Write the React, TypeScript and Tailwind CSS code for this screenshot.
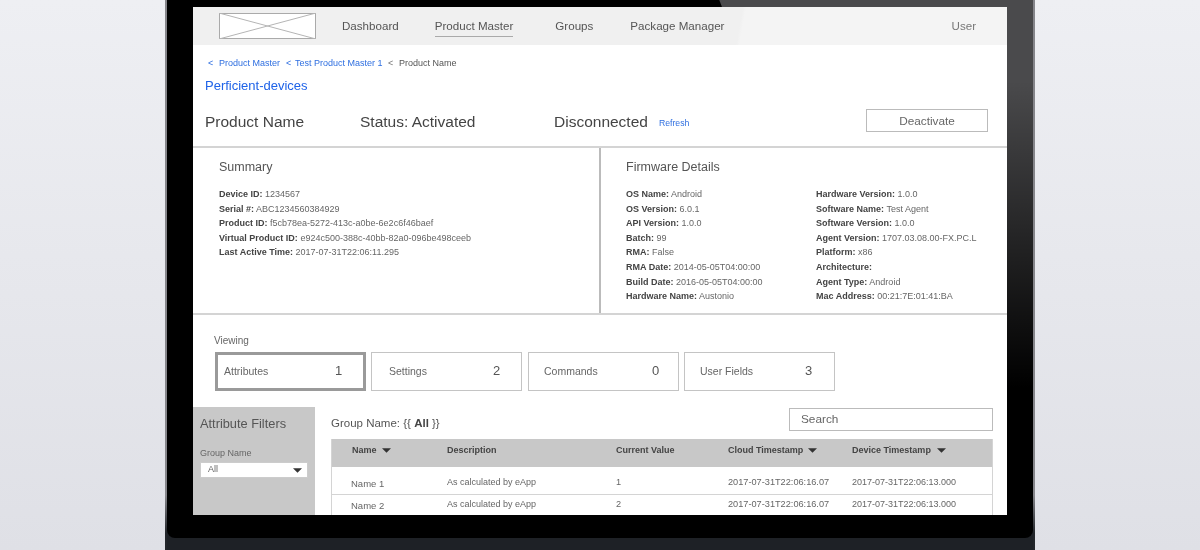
const sans = "font-['Liberation_Sans',Arial,sans-serif]";

function Caret({ className = "" }: { className?: string }) {
  return (
    <svg width="9" height="5" viewBox="0 0 10 5" className={className}>
      <path d="M0 0h10L5 5z" fill="#333" />
    </svg>
  );
}

function KV({ k, v }: { k: string; v?: string }) {
  return (
    <div className="h-[14.6px] leading-[14.6px] whitespace-nowrap">
      <b className="font-bold text-[#444]">{k}:</b> <span className="text-[#666]">{v}</span>
    </div>
  );
}

function Tab({ label, n, active, labelW, pad, extra = "" }: { label: string; n: string; active?: boolean; labelW: string; pad: string; extra?: string }) {
  return (
    <div
      className={`w-[151px] h-[39px] flex items-center ${pad} ${extra} ${
        active ? "border-[3px] border-[#9a9a9a]" : "border border-[#c4c4c4]"
      }`}
    >
      <span className={`text-[10.5px] text-[#666] shrink-0 ${labelW}`}>{label}</span>
      <span className="text-[13px] text-[#555] -mt-[2px]">{n}</span>
    </div>
  );
}

const left = [
  ["OS Name", "Android"],
  ["OS Version", "6.0.1"],
  ["API Version", "1.0.0"],
  ["Batch", "99"],
  ["RMA", "False"],
  ["RMA Date", "2014-05-05T04:00:00"],
  ["Build Date", "2016-05-05T04:00:00"],
  ["Hardware Name", "Austonio"],
];
const right = [
  ["Hardware Version", "1.0.0"],
  ["Software Name", "Test Agent"],
  ["Software Version", "1.0.0"],
  ["Agent Version", "1707.03.08.00-FX.PC.L"],
  ["Platform", "x86"],
  ["Architecture", ""],
  ["Agent Type", "Android"],
  ["Mac Address", "00:21:7E:01:41:BA"],
];

function Row({ name, h, nameOffset, extra }: { name: string; h: string; nameOffset: string; extra: string }) {
  return (
    <div className={`flex items-center text-[9.2px] text-[#666] ${h} ${extra}`}>
      <span className={`w-[115px] pl-[19px] shrink-0 text-[9.5px] ${nameOffset}`}>{name}</span>
      <span className="w-[169px] shrink-0 text-[9px]">As calculated by eApp</span>
      <span className="w-[112px] shrink-0">{name.slice(-1)}</span>
      <span className="w-[124px] shrink-0">2017-07-31T22:06:16.07</span>
      <span className="shrink-0 text-[9px]">2017-07-31T22:06:13.000</span>
    </div>
  );
}

export default function App() {
  return (
    <div className={`${sans} w-[1200px] h-[550px] overflow-hidden flex justify-center bg-[linear-gradient(to_bottom,#eeeff3,#dfe0e6)]`}>
      <div className="w-[870px] h-[550px] shrink-0 bg-[linear-gradient(to_bottom,#85858a,#85858a_90%,#22252a_97%)] pl-[2px] pr-[2px]">
        <div className="w-full h-full bg-[#1e2126]">
          <div className="w-full h-[538px] rounded-b-[8px] pt-[7px] pl-[26px] pr-[26px] bg-[linear-gradient(to_bottom,transparent,transparent_15%,#000_72%),linear-gradient(69deg,#000_70.7%,#4a4a4c_70.8%)] bg-black">
            <div className="h-[508px] bg-white overflow-hidden flex flex-col blur-[0.4px]">
              <div className="h-[38px] shrink-0 bg-[linear-gradient(100deg,#f0f0f0_67%,#f4f4f4_67.4%)] flex items-center pl-[26px] text-[11.6px] text-[#555]">
                <svg width="97" height="26" viewBox="0 0 97 26" className="shrink-0 bg-white">
                  <rect x=".5" y=".5" width="96" height="25" fill="none" stroke="#aaa" />
                  <path d="M0 0L97 26M97 0L0 26" stroke="#b5b5b5" strokeWidth="1" />
                </svg>
                <span className="ml-[26px]">Dashboard</span>
                <span className="ml-[36px] pb-[2px] border-b border-[#aaa] mt-[2px]">Product Master</span>
                <span className="ml-[42px]">Groups</span>
                <span className="ml-[37px]">Package Manager</span>
                <span className="ml-auto mr-[31px] text-[#777]">User</span>
              </div>
              <div className="h-[101px] shrink-0 px-[12px]">
                <div className="pt-[12px] pl-[3px] text-[9px] leading-[12px] text-[#2f6fe0] flex">
                  <span className="w-[11px]">&lt;</span>
                  <span className="w-[67px]">Product Master</span>
                  <span className="w-[9px]">&lt;</span>
                  <span className="w-[93px]">Test Product Master 1</span>
                  <span className="w-[11px] text-[#777]">&lt;</span>
                  <span className="text-[#555]">Product Name</span>
                </div>
                <div className="mt-[9px] text-[13px] leading-[16px] text-[#1f63e8]">Perficient-devices</div>
                <div className="mt-[16px] flex items-center text-[#444] text-[15.5px] leading-[20px]">
                  <span className="w-[155px]">Product Name</span>
                  <span className="w-[194px]">Status: Activated</span>
                  <span>Disconnected</span>
                  <span className="ml-[11px] mt-[3px] text-[8.7px] text-[#2f6fe0]">Refresh</span>
                  <div className="ml-auto mr-[7px] -mt-[2px] w-[122px] h-[23px] border border-[#bbb] flex items-center justify-center text-[11.8px] text-[#666]">
                    Deactivate
                  </div>
                </div>
              </div>
              <div className="h-[169px] shrink-0 flex border-y-2 border-[#d4d4d4] text-[9px]">
                <div className="w-[408px] border-r-2 border-[#bbb] pl-[26px] pt-[11px]">
                  <div className="text-[12.5px] leading-[16px] text-[#555] mb-[12px]">Summary</div>
                  <KV k="Device ID" v="1234567" />
                  <KV k="Serial #" v="ABC1234560384929" />
                  <KV k="Product ID" v="f5cb78ea-5272-413c-a0be-6e2c6f46baef" />
                  <KV k="Virtual Product ID" v="e924c500-388c-40bb-82a0-096be498ceeb" />
                  <KV k="Last Active Time" v="2017-07-31T22:06:11.295" />
                </div>
                <div className="flex-1 pl-[25px] pt-[11px]">
                  <div className="text-[12.5px] leading-[16px] text-[#555] mb-[12px]">Firmware Details</div>
                  <div className="flex">
                    <div className="w-[190px]">{left.map(([k, v]) => <KV key={k} k={k} v={v} />)}</div>
                    <div>{right.map(([k, v]) => <KV key={k} k={k} v={v} />)}</div>
                  </div>
                </div>
              </div>
              <div className="pl-[21px] pt-[20px] h-[92px] shrink-0">
                <div className="text-[10px] leading-[12px] text-[#666] mb-[5px]">Viewing</div>
                <div className="flex gap-[5px] ml-[1px]">
                  <Tab label="Attributes" n="1" active labelW="w-[111px]" pad="pl-[6px]" />
                  <Tab label="Settings" n="2" labelW="w-[104px]" pad="pl-[17px]" />
                  <Tab label="Commands" n="0" labelW="w-[108px]" pad="pl-[15px]" extra="ml-[1px]" />
                  <Tab label="User Fields" n="3" labelW="w-[105px]" pad="pl-[15px]" />
                </div>
              </div>
              <div className="flex-1 flex min-h-0">
                <div className="w-[122px] shrink-0 bg-[#c8c8c8] pl-[7px] pt-[9px]">
                  <div className="text-[12.8px] leading-[16px] text-[#555]">Attribute Filters</div>
                  <div className="text-[9px] leading-[11px] text-[#666] mt-[16px]">Group Name</div>
                  <div className="mt-[3px] w-[108px] h-[16px] bg-white border border-[#ccc] flex items-center justify-between pl-[7px] pr-[5px] text-[9px] text-[#666]">
                    All
                    <Caret />
                  </div>
                </div>
                <div className="flex-1 pl-[16px] pr-[14px] pt-[1px] min-w-0">
                  <div className="flex justify-between items-center h-[23px]">
                    <span className="text-[11.5px] text-[#555] mt-[8px]">Group Name: {"{{"} <b className="text-[#444]">All</b> {"}}"}</span>
                    <div className="w-[204px] h-[23px] border border-[#bbb] flex items-center pl-[11px] text-[11.8px] text-[#666]">Search</div>
                  </div>
                  <div className="mt-[8px] border-x border-[#d4d4d4]">
                    <div className="h-[28px] bg-[#c8c8c8] pt-[4px] flex text-[9px] font-bold text-[#444]">
                      <span className="w-[115px] pl-[20px] flex items-start gap-[5px] pt-[1px]">Name <Caret className="mt-[4px]" /></span>
                      <span className="w-[169px] pt-[1px]">Description</span>
                      <span className="w-[112px] pt-[1px]">Current Value</span>
                      <span className="w-[124px] flex gap-[5px] pt-[1px]">Cloud Timestamp <Caret className="mt-[4px]" /></span>
                      <span className="flex gap-[6px] pt-[1px]">Device Timestamp <Caret className="mt-[4px]" /></span>
                    </div>
                    <Row name="Name 1" h="h-[28px]" nameOffset="mt-[4px]" extra="pt-[4px] border-b border-[#d4d4d4]" />
                    <Row name="Name 2" h="h-[20px]" nameOffset="mt-[3px]" extra="" />
                  </div>
                </div>
              </div>
            </div>
          </div>
        </div>
      </div>
    </div>
  );
}
